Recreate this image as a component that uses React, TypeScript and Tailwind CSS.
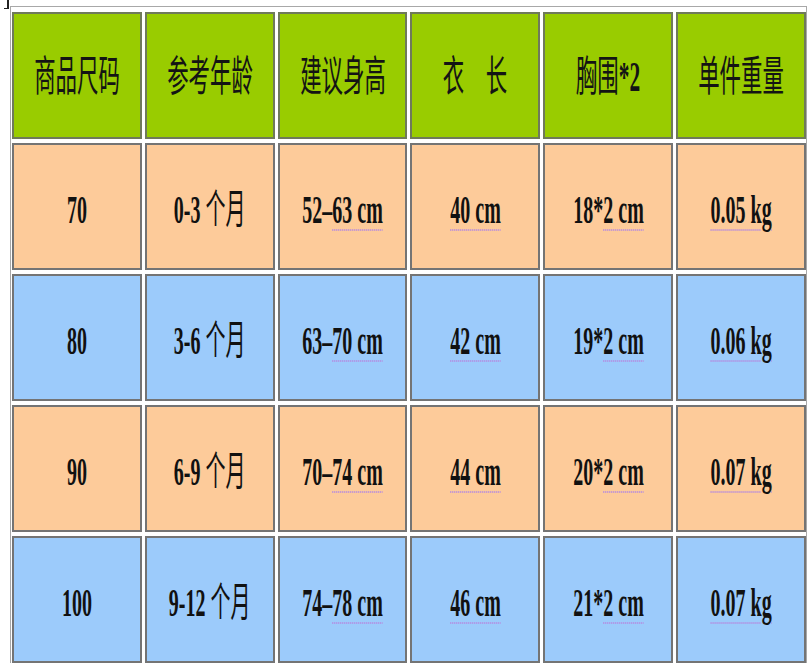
const headers = ['商品尺码', '参考年龄', '建议身高', '衣　长', '胸围*2', '单件重量'];

type Part = { t: string; cjk?: boolean; mark?: boolean };

const rows: { bg: string; cells: Part[][] }[] = [
  {
    bg: 'bg-[#fdcb9a]',
    cells: [
      [{ t: '70' }],
      [{ t: '0-3 ' }, { t: '个月', cjk: true }],
      [{ t: '52–' }, { t: '63 cm', mark: true }],
      [{ t: '40 cm', mark: true }],
      [{ t: '18*' }, { t: '2 cm', mark: true }],
      [{ t: '0.05 kg', mark: true }],
    ],
  },
  {
    bg: 'bg-[#9ccbfb]',
    cells: [
      [{ t: '80' }],
      [{ t: '3-6 ' }, { t: '个月', cjk: true }],
      [{ t: '63–' }, { t: '70 cm', mark: true }],
      [{ t: '42 cm', mark: true }],
      [{ t: '19*' }, { t: '2 cm', mark: true }],
      [{ t: '0.06 kg', mark: true }],
    ],
  },
  {
    bg: 'bg-[#fdcb9a]',
    cells: [
      [{ t: '90' }],
      [{ t: '6-9 ' }, { t: '个月', cjk: true }],
      [{ t: '70–' }, { t: '74 cm', mark: true }],
      [{ t: '44 cm', mark: true }],
      [{ t: '20*' }, { t: '2 cm', mark: true }],
      [{ t: '0.07 kg', mark: true }],
    ],
  },
  {
    bg: 'bg-[#9ccbfb]',
    cells: [
      [{ t: '100' }],
      [{ t: '9-12 ' }, { t: '个月', cjk: true }],
      [{ t: '74–' }, { t: '78 cm', mark: true }],
      [{ t: '46 cm', mark: true }],
      [{ t: '21*' }, { t: '2 cm', mark: true }],
      [{ t: '0.07 kg', mark: true }],
    ],
  },
];

const font = "font-['Liberation_Serif','Noto_Sans_CJK_SC',serif]";

export default function App() {
  return (
    <div className="relative h-[665px] w-[809px] overflow-hidden bg-white">
      {/* little mark in the corner */}
      <div className="absolute left-[4px] top-0 h-[9px] w-[5px] border-b border-r-2 border-[#222]" />
      <div className="ml-[10px] mt-[6px] w-[797px] border-l border-r border-t border-[#a8a8a8] pl-[1px] pt-[5px]">
        <div className="grid w-[794px] grid-cols-6 gap-x-[3px] gap-y-[4px]">
          {headers.map((h) => (
            <div
              key={h}
              className="flex h-[127px] items-center justify-center border-2 border-[#6f7a5a] bg-[#99cc00]"
            >
              <span
                className={`${font} mt-[2px] scale-x-[0.51] whitespace-nowrap text-[42px] font-normal leading-none text-[#141414]`}
              >
                {h.endsWith('*2') ? (
                  <>
                    胸围<span className="font-bold">*2</span>
                  </>
                ) : (
                  h
                )}
              </span>
            </div>
          ))}
          {rows.map((r, ri) =>
            r.cells.map((parts, ci) => (
              <div
                key={`${ri}-${ci}`}
                className={`flex h-[127px] items-center justify-center border-2 border-[#747474] ${r.bg}`}
              >
                <span
                  className={`${font} mt-[6px] scale-x-50 whitespace-nowrap text-[40px] font-bold leading-none text-[#111]`}
                >
                  {parts.map((p, pi) =>
                    p.cjk ? (
                      <span key={pi} className="font-normal">
                        {p.t}
                      </span>
                    ) : p.mark ? (
                      <span
                        key={pi}
                        className="underline decoration-[#b58ae0] decoration-dotted decoration-[1.5px] underline-offset-[7px]"
                      >
                        {p.t}
                      </span>
                    ) : (
                      <span key={pi}>{p.t}</span>
                    )
                  )}
                </span>
              </div>
            ))
          )}
        </div>
      </div>
    </div>
  );
}
